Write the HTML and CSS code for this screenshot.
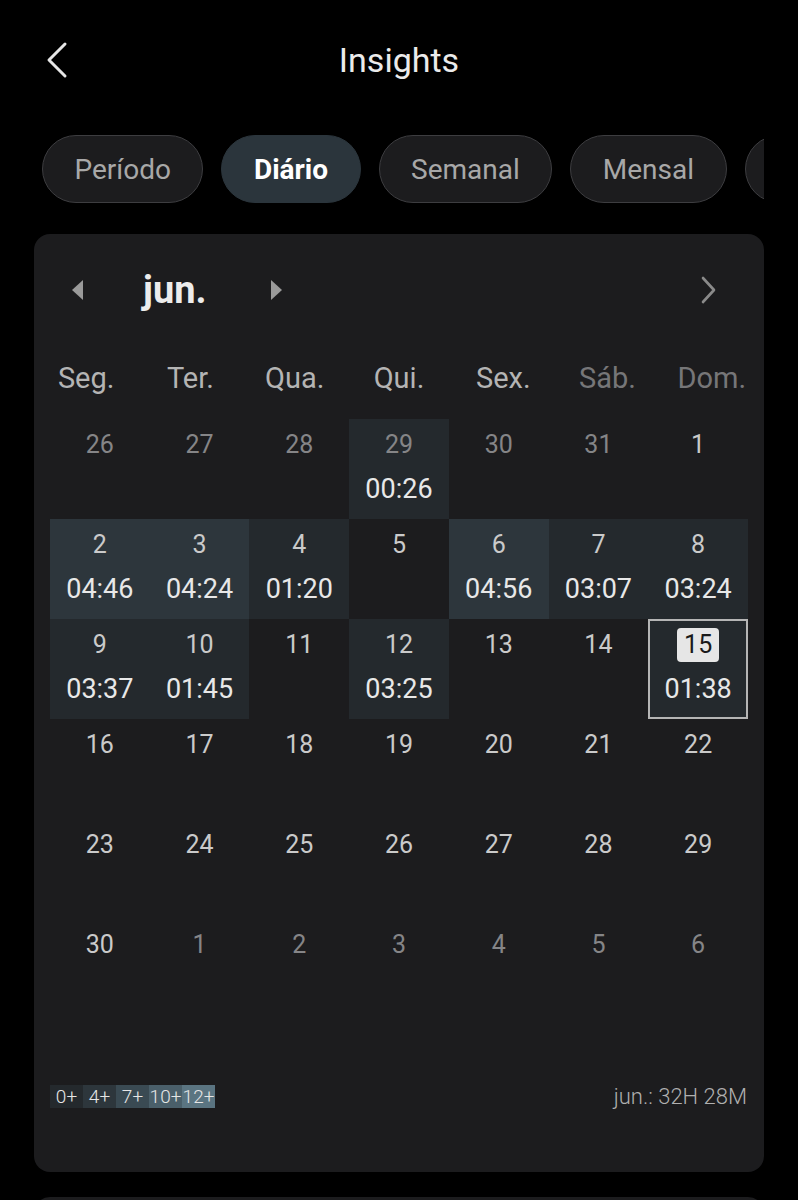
FILE: index.html
```html
<!DOCTYPE html>
<html lang="pt">
<head>
  <meta charset="UTF-8">
  <meta name="viewport" content="width=device-width, initial-scale=1.0">
  <title>Insights</title>
  <link rel="stylesheet" href="styles.css">
</head>
<body>
  <header class="top-bar">
    <svg class="back-icon" width="24" height="38" viewBox="0 0 24 38">
      <path d="M20 3 L4 19 L20 35" fill="none" stroke="#e6e6e6" stroke-width="3" stroke-linecap="round" stroke-linejoin="round"/>
    </svg>
    <h1>Insights</h1>
  </header>

  <nav class="tabs">
    <span class="tab">Período</span>
    <span class="tab active">Diário</span>
    <span class="tab">Semanal</span>
    <span class="tab">Mensal</span>
    <span class="tab tab-more"></span>
  </nav>

  <section class="card">
    <div class="month-nav">
      <div class="month-picker">
        <svg class="tri" width="12" height="22" viewBox="0 0 12 22"><path d="M11 1 L0 11 L11 21 Z" fill="#9a9a9a"/></svg>
        <span class="month">jun.</span>
        <svg class="tri" width="12" height="22" viewBox="0 0 12 22"><path d="M1 1 L12 11 L1 21 Z" fill="#9a9a9a"/></svg>
      </div>
      <svg class="next-icon" width="20" height="30" viewBox="0 0 20 30">
        <path d="M5 3 L16 15 L5 27" fill="none" stroke="#8a8a8a" stroke-width="2.6" stroke-linecap="round" stroke-linejoin="round"/>
      </svg>
    </div>

    <div class="weekdays">
      <span>Seg.</span><span>Ter.</span><span>Qua.</span><span>Qui.</span><span>Sex.</span>
      <span class="weekend">Sáb.</span><span class="weekend">Dom.</span>
    </div>

    <div class="calendar" id="calendar"></div>

    <div class="footer">
      <div class="legend">
        <span class="lv0">0+</span><span class="lv1">4+</span><span class="lv2">7+</span><span class="lv3">10+</span><span class="lv4">12+</span>
      </div>
      <span class="total">jun.: 32H 28M</span>
    </div>
  </section>

  <div class="next-card"></div>

  <script>
    // [day, time, level, outside month, today]
    var days = [
      [26, '', -1, true], [27, '', -1, true], [28, '', -1, true], [29, '00:26', 0, true],
      [30, '', -1, true], [31, '', -1, true], [1, '', -1],
      [2, '04:46', 1], [3, '04:24', 1], [4, '01:20', 0], [5, '', -1],
      [6, '04:56', 1], [7, '03:07', 0], [8, '03:24', 0],
      [9, '03:37', 0], [10, '01:45', 0], [11, '', -1], [12, '03:25', 0],
      [13, '', -1], [14, '', -1], [15, '01:38', 0, false, true],
      [16], [17], [18], [19], [20], [21], [22],
      [23], [24], [25], [26], [27], [28], [29],
      [30], [1, '', -1, true], [2, '', -1, true], [3, '', -1, true],
      [4, '', -1, true], [5, '', -1, true], [6, '', -1, true]
    ];

    var calendar = document.getElementById('calendar');
    days.forEach(function (d) {
      var cell = document.createElement('div');
      cell.className = 'day';
      if (d[2] >= 0) cell.className += ' lv' + d[2];
      if (d[3]) cell.className += ' outside';
      if (d[4]) cell.className += ' today';

      var num = document.createElement('div');
      num.className = 'num';
      num.innerHTML = d[4] ? '<span class="today-num">' + d[0] + '</span>' : d[0];
      cell.appendChild(num);

      if (d[1]) {
        var time = document.createElement('div');
        time.className = 'time';
        time.innerText = d[1];
        cell.appendChild(time);
      }
      calendar.appendChild(cell);
    });
  </script>
</body>
</html>
```

FILE: styles.css
```css
body {
  margin: 0;
  background: #000;
  color: #e6e6e6;
  font-family: Roboto, 'Noto Sans', sans-serif;
  width: 798px;
  height: 1200px;
  overflow: hidden;
}

.top-bar {
  position: relative;
  height: 120px;
  display: flex;
  align-items: center;
  justify-content: center;
}

.top-bar h1 {
  margin: 0;
  font-size: 34px;
  font-weight: 400;
  color: #ebebeb;
}

.back-icon {
  position: absolute;
  left: 45px;
  top: 41px;
}

.tabs {
  display: flex;
  gap: 18px;
  margin: 15px 34px 0 42px;
  overflow: hidden;
}

.tab {
  flex: none;
  height: 66px;
  padding: 0 31.5px;
  display: flex;
  align-items: center;
  border: 1.5px solid #3d3d40;
  border-radius: 34px;
  background: #1c1c1e;
  color: #a8a8a8;
  font-size: 28px;
}

.tab.active {
  background: #2b353c;
  border-color: #2b353c;
  color: #fff;
  font-weight: 700;
}

.tab-more {
  width: 90px;
}

.card {
  margin: 31px 34px 0;
  padding: 28px 16px 63px;
  background: #1c1c1e;
  border-radius: 16px;
}

.month-nav {
  height: 56px;
  display: flex;
  align-items: center;
  justify-content: space-between;
}

.month-picker {
  display: flex;
  align-items: center;
  margin-left: 22px;
}

.month {
  font-size: 38px;
  font-weight: 700;
  color: #ececec;
  margin: 0 63px 0 59px;
}

.next-icon {
  margin-right: 30px;
}

.weekdays {
  display: grid;
  grid-template-columns: repeat(7, 1fr);
  margin: 40px -16px 21px;
  height: 40px;
  line-height: 40px;
  text-align: center;
  font-size: 29px;
  color: #b4b4b4;
}

.weekdays .weekend {
  color: #767678;
}

.calendar {
  display: grid;
  grid-template-columns: repeat(7, 1fr);
  grid-auto-rows: 100px;
}

.day {
  box-sizing: border-box;
  padding-top: 12px;
  text-align: center;
}

.day .num {
  font-size: 25px;
  line-height: 28px;
  color: #cacaca;
}

.day.outside .num {
  color: #858587;
}

.day .time {
  margin-top: 14px;
  font-size: 27px;
  line-height: 32px;
  color: #e8e8e8;
}

.lv0 {
  background: #24292d;
}

.lv1 {
  background: #2d363c;
}

.lv2 {
  background: #3a4a53;
}

.lv3 {
  background: #4a5f6a;
}

.lv4 {
  background: #5a7481;
}

.day.today {
  border: 2px solid #b5b5b5;
  padding-top: 10px;
}

.today-num {
  display: inline-block;
  margin: -3px 0;
  padding: 0 7px;
  line-height: 34px;
  border-radius: 4px;
  background: #e6e6e6;
  color: #1a1a1a;
}

.footer {
  margin-top: 65px;
  display: flex;
  align-items: center;
  justify-content: space-between;
}

.legend {
  display: flex;
  height: 23px;
  line-height: 23px;
  font-size: 19px;
  font-weight: 300;
  color: #e6e6e6;
}

.legend span {
  width: 33px;
  text-align: center;
}

.total {
  font-size: 22px;
  font-weight: 300;
  color: #b0b0b0;
  margin-right: 1px;
}

.next-card {
  margin: 25px 34px 0;
  height: 40px;
  background: #1c1c1e;
  border-radius: 16px 16px 0 0;
}
```
